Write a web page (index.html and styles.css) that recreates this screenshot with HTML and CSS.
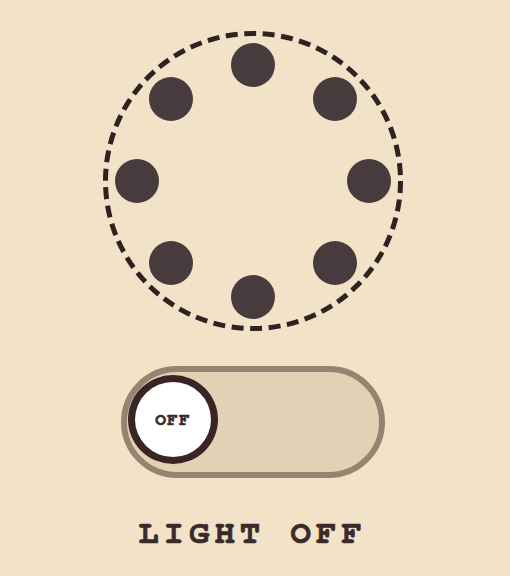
FILE: index.html
```html
<!DOCTYPE html>
<html lang="en">
  <head>
    <meta charset="UTF-8" />
    <meta name="viewport" content="width=device-width, initial-scale=1.0" />
    <title>Light Switch</title>
    <link rel="stylesheet" href="styles.css">
  </head>
  <body>
    <main class="lamp">
      <svg class="dial" width="300" height="300" viewBox="0 0 300 300">
        <circle class="ring" cx="150" cy="150" r="147.5" />
        <circle class="bulb" cx="150" cy="34" r="22" />
        <circle class="bulb" cx="232" cy="68" r="22" />
        <circle class="bulb" cx="266" cy="150" r="22" />
        <circle class="bulb" cx="232" cy="232" r="22" />
        <circle class="bulb" cx="150" cy="266" r="22" />
        <circle class="bulb" cx="68" cy="232" r="22" />
        <circle class="bulb" cx="34" cy="150" r="22" />
        <circle class="bulb" cx="68" cy="68" r="22" />
      </svg>

      <div class="switch">
        <div class="knob">OFF</div>
      </div>

      <p class="status">LIGHT OFF</p>
    </main>
  </body>
</html>
```

FILE: styles.css
```css
body {
  margin: 0;
  background-color: #f2e2c8;
  font-family: "Nimbus Mono PS", "Nimbus Mono L", FreeMono, "Liberation Mono", monospace;
}

.lamp {
  display: flex;
  flex-direction: column;
  align-items: center;
  padding: 31px 5px 0 0;
}

.dial {
  display: block;
}

.ring {
  fill: none;
  stroke: #2f2322;
  stroke-width: 5;
  stroke-dasharray: 12 6.54;
}

.bulb {
  fill: #483b3d;
}

.switch {
  position: relative;
  margin-top: 35px;
  width: 252px;
  height: 100px;
  border: 6px solid #968472;
  border-radius: 60px;
  background-color: #e2d2b5;
}

.knob {
  position: absolute;
  left: 1px;
  top: 3px;
  width: 75px;
  height: 75px;
  border: 7px solid #3a2526;
  border-radius: 50%;
  background-color: #fff;
  display: flex;
  align-items: center;
  justify-content: center;
  padding-left: 1px;
  box-sizing: content-box;
  font-size: 18px;
  font-weight: bold;
  letter-spacing: 1px;
  color: #3b2a2a;
  -webkit-text-stroke: 0.6px #3b2a2a;
}

.status {
  margin: 38px 0 0;
  font-size: 34px;
  font-weight: bold;
  letter-spacing: 5px;
  color: #3b2a2a;
  -webkit-text-stroke: 0.7px #3b2a2a;
}
```
